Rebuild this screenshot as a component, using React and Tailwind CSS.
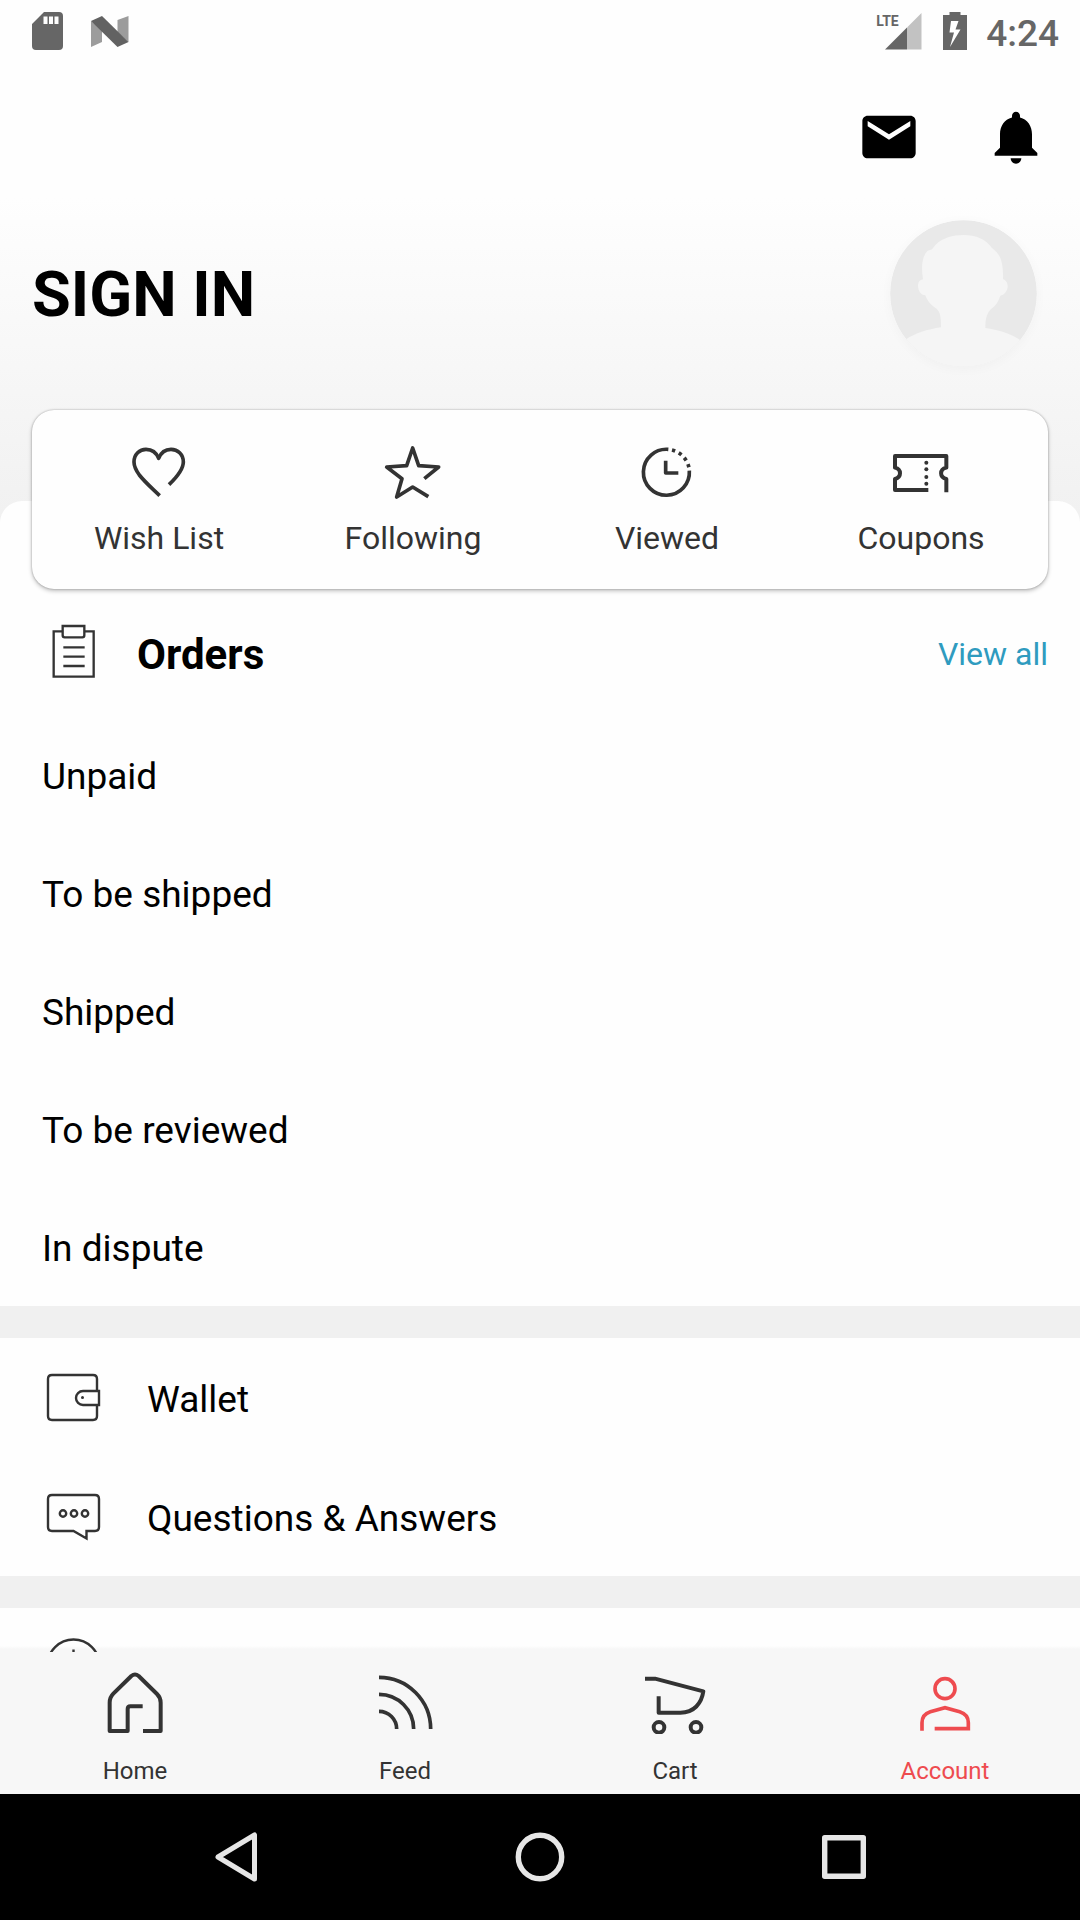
import React from "react";

function LineIcon({ viewBox, size = "size-[60px]", width = 11, children }) {
  return (
    <svg
      viewBox={viewBox}
      className={`${size} shrink-0`}
      fill="none"
      stroke="currentColor"
      strokeWidth={width}
      strokeLinejoin="round"
      aria-hidden="true"
    >
      {children}
    </svg>
  );
}

const shortcuts = [
  {
    label: "Wish List",
    icon: (
      <LineIcon viewBox="117 120 180 180">
        <path d="M209 287 C190 268 166 248 148 225 C138 211 132 200 132 186 C132 163 149 148 168 148 C188 148 200 160 206 175 C212 160 224 148 243 148 C263 148 280 163 280 186 C280 208 262 230 237 254" />
      </LineIcon>
    ),
  },
  {
    label: "Following",
    icon: (
      <LineIcon viewBox="879 120 180 180">
        <path d="M1015 290 L968 261 L920 291 L936 236 L890 201 L950 197 L968 144 L986 197 L1046 201 L1003 236" />
      </LineIcon>
    ),
  },
  {
    label: "Viewed",
    icon: (
      <LineIcon viewBox="171 120 180 180">
        <path d="M265 148 A69 69 0 1 0 328 212" />
        <path d="M276 150 A69 69 0 0 1 327 203" strokeDasharray="10 12" />
        <path d="M257 182 V219 H295" />
      </LineIcon>
    ),
  },
  {
    label: "Coupons",
    icon: (
      <LineIcon viewBox="933 120 180 180" width={12}>
        <path d="M1045 270 H945 V237 C965 231 965 208 945 203 V168 H1099 V203 C1078 208 1078 232 1099 237 V277" />
        <g fill="currentColor" stroke="none">
          <circle cx="1039" cy="188" r="6" />
          <circle cx="1039" cy="208" r="6" />
          <circle cx="1039" cy="231" r="6" />
          <circle cx="1039" cy="251" r="6" />
        </g>
      </LineIcon>
    ),
  },
];

const orderStates = ["Unpaid", "To be shipped", "Shipped", "To be reviewed", "In dispute"];

const tools = [
  {
    label: "Wallet",
    icon: (
      <LineIcon viewBox="43 1368 60 60" width={2.4}>
        <path d="M97 1391 V1379 q0 -4 -4 -4 H52 q-4 0 -4 4 V1416 q0 4 4 4 H93 q4 0 4 -4 V1405" />
        <path d="M99 1391 H83 a7 7 0 0 0 0 14 H99 Z" strokeLinejoin="miter" />
        <circle cx="82.5" cy="1397.5" r="1.5" fill="currentColor" stroke="none" />
      </LineIcon>
    ),
  },
  {
    label: "Questions & Answers",
    icon: (
      <LineIcon viewBox="43 1487 60 60" width={2.4}>
        <path
          d="M52 1495 H95 q4 0 4 4 V1527 q0 4 -4 4 H86.5 V1538.5 L73.5 1531 H52 q-4 0 -4 -4 V1499 q0 -4 4 -4 Z"
          strokeLinejoin="miter"
        />
        <circle cx="63" cy="1513.5" r="3.2" />
        <circle cx="74" cy="1513.5" r="3.2" />
        <circle cx="85" cy="1513.5" r="3.2" />
      </LineIcon>
    ),
  },
];

const tabs = [
  {
    label: "Home",
    icon: (
      <LineIcon viewBox="126 84 198 198" size="size-[66px]" width={12}>
        <path d="M248 199 H211 Q203 199 203 207 V273 H149 V188 Q149 172 160 161 L214 108 Q225 99 236 108 L291 162 Q302 173 302 188 V273 H249" />
      </LineIcon>
    ),
  },
  {
    label: "Feed",
    icon: (
      <LineIcon viewBox="936 84 198 198" size="size-[66px]">
        <path d="M957 112 A155 155 0 0 1 1112 267" />
        <path d="M957 163 A104 104 0 0 1 1061 267" />
        <path d="M957 214 A53 53 0 0 1 1010 267" />
      </LineIcon>
    ),
  },
  {
    label: "Cart",
    icon: (
      <LineIcon viewBox="126 84 198 198" size="size-[66px]" width={12}>
        <path d="M135 116 H165 L310 154 C305 190 282 218 241 218 H176 V169" />
        <circle cx="177" cy="262" r="16" />
        <circle cx="288" cy="262" r="16" />
      </LineIcon>
    ),
  },
  {
    label: "Account",
    active: true,
    icon: (
      <LineIcon viewBox="936 84 198 198" size="size-[66px]">
        <circle cx="1035" cy="146" r="30" />
        <path
          d="M966 272 V248 Q966 223 991 215 L1035 203 L1079 215 Q1105 223 1105 248 V266 H1004"
          strokeLinejoin="miter"
        />
      </LineIcon>
    ),
  },
];

function StatusBar() {
  return (
    <div className="flex h-[72px] shrink-0 items-start justify-between pt-3 pr-[21px] pl-8 text-[#666]">
      <div className="flex gap-7">
        <svg viewBox="0 0 31 38" className="h-[38px] w-[31px]" aria-hidden="true">
          <path
            fill="currentColor"
            fillRule="evenodd"
            d="M12 0 H27 Q31 0 31 4 V34 Q31 38 27 38 H4 Q0 38 0 34 V12 Z M11.5 4.5 V12 H15.5 V4.5 Z M17 4.5 V12 H21 V4.5 Z M22.5 4.5 V12 H26.5 V4.5 Z"
          />
        </svg>
        <svg viewBox="0 0 38 38" className="size-[38px]" aria-hidden="true">
          <path fill="#9c9c9c" d="M0 9 L11 18 V30 L0 35 Z M26.5 8 L37.5 4 V30 L26.5 20 Z" />
          <path fill="#626262" d="M0 9 L11 4 L37.5 30 L26.5 35 Z" />
        </svg>
      </div>
      <div className="flex">
        <div className="relative w-[46px]">
          <svg viewBox="0 0 46 38" className="h-[38px] w-[46px]" aria-hidden="true">
            <path fill="#c2c2c2" d="M45.5 1 V37.5 H31 V15.5 Z" />
            <path fill="currentColor" d="M31 15.5 V37.5 H9 Z" />
          </svg>
          <span className="absolute top-0 left-0 text-[14px] leading-[18px] font-bold">LTE</span>
        </div>
        <svg viewBox="0 0 24 38" className="ml-[21px] h-[38px] w-6" aria-label="Battery charging" role="img">
          <path
            fill="currentColor"
            fillRule="evenodd"
            d="M6.5 0 H17.5 V3 H24 V38 H0 V3 H6.5 Z M8 9 L6.5 20.5 H11 L7 35 L17.5 17.5 H12.5 L15.5 9 Z"
          />
        </svg>
        <time className="ml-[19px] text-[37px] leading-[43px] font-medium">4:24</time>
      </div>
    </div>
  );
}

function Avatar() {
  return (
    <svg
      viewBox="150 60 441 441"
      className="size-[147px] rounded-full shadow-[0_2px_12px_rgba(0,0,0,0.03)]"
      aria-hidden="true"
    >
      <clipPath id="avatar-clip">
        <circle cx="370.5" cy="280.5" r="220" />
      </clipPath>
      <g clipPath="url(#avatar-clip)">
        <rect x="150" y="60" width="441" height="441" fill="#e9e9e9" />
        <path
          fill="#f5f5f5"
          d="M370 105 C408 105 438 118 456 144 C468 154 476 162 480 172 C488 190 490 214 489 238 C497 240 504 248 503 262 C500 276 492 285 481 287 C476 304 466 318 454 326 C442 338 436 350 436 384 C480 390 520 404 545 424 L560 520 H180 L198 418 C225 400 262 388 303 382 C303 350 301 338 290 326 C272 316 262 302 256 286 C242 286 235 272 234 258 C234 246 240 240 249 238 C243 200 246 170 262 153 L276 148 L287 134 C308 114 338 105 370 105 Z"
        />
      </g>
    </svg>
  );
}

export default function App() {
  return (
    <div className="flex h-screen flex-col bg-[#fefefe] font-[Roboto,sans-serif] text-black">
      <StatusBar />

      <main className="min-h-0 flex-1 overflow-y-auto [scrollbar-width:none]">
        <header className="bg-[linear-gradient(to_bottom,#fefefe_24%,#f0f0f0_90%)] px-8 pt-[33px]">
          <div className="flex justify-end gap-[63px]">
            <button aria-label="Messages">
              <svg viewBox="0 0 24 24" className="size-16" fill="currentColor">
                <path d="M20 4H4c-1.1 0-1.99.9-1.99 2L2 18c0 1.1.9 2 2 2h16c1.1 0 2-.9 2-2V6c0-1.1-.9-2-2-2zm0 4l-8 5-8-5V6l8 5 8-5v2z" />
              </svg>
            </button>
            <button aria-label="Notifications">
              <svg viewBox="0 0 24 24" className="size-16" fill="currentColor">
                <path d="M12 22c1.1 0 2-.9 2-2h-4c0 1.1.89 2 2 2zm6-6v-5c0-3.07-1.64-5.64-4.5-6.32V4c0-.83-.67-1.5-1.5-1.5s-1.5.67-1.5 1.5v.68C7.63 5.36 6 7.92 6 11v5l-2 2v1h16v-1l-2-2z" />
              </svg>
            </button>
          </div>

          <div className="mt-[51px] flex items-center justify-between pr-[11px]">
            <a href="#sign-in" className="pt-0.5 text-[63px] leading-[76px] font-bold">
              SIGN IN
            </a>
            <Avatar />
          </div>

          <nav
            aria-label="Shortcuts"
            className="relative z-10 mt-[43px] grid grid-cols-4 rounded-[22px] bg-[#fefefe] pt-[30px] pb-[31px] text-[#333] shadow-[0_2px_4px_rgba(0,0,0,0.25),0_0_2px_rgba(0,0,0,0.3)]"
          >
            {shortcuts.map((s) => (
              <a key={s.label} href="#shortcut" className="flex flex-col items-center gap-[18px]">
                {s.icon}
                <span className="text-[32px] leading-10">{s.label}</span>
              </a>
            ))}
          </nav>
        </header>

        <section className="-mt-[88px] rounded-t-[22px] bg-[#fefefe] pt-[120px] pb-[30px]">
          <div className="flex h-[68px] items-center pr-8 pl-[43px]">
            <div className="self-start text-[#333]">
              <LineIcon viewBox="129 62 180 180" width={7}>
                <g strokeLinejoin="miter">
                  <path d="M186 93 H161 V229 H281 V93 H255" />
                  <path d="M188 77 H253 V105 Q253 111 247 111 H194 Q188 111 188 105 Z" />
                  <path d="M190 141 H254 M190 169 H254 M190 197 H254" />
                </g>
              </LineIcon>
            </div>
            <h2 className="ml-[34px] flex-1 text-[42px] leading-[50px] font-bold">Orders</h2>
            <a href="#orders" className="pb-0.5 text-[32px] leading-10 text-[#2f9bbf]">
              View all
            </a>
          </div>
          <ul className="mt-[61px] flex flex-col gap-16 px-[42px]">
            {orderStates.map((label) => (
              <li key={label} className="text-[37px] leading-[54px]">
                <a href="#orders">{label}</a>
              </li>
            ))}
          </ul>
        </section>

        <div className="h-8 bg-[#f0f0f0]" />

        <ul>
          {tools.map((t) => (
            <li key={t.label}>
              <a href="#tool" className="flex h-[119px] items-center gap-11 px-[43px]">
                <span className="text-[#333]">{t.icon}</span>
                <span className="pt-1 text-[37px] leading-[54px]">{t.label}</span>
              </a>
            </li>
          ))}
        </ul>

        <div className="h-8 bg-[#f0f0f0]" />

        <div className="bg-[linear-gradient(to_bottom,#fefefe_38px,#f7f7f7_41px)] px-[43px] pt-6 text-[#333]">
          <LineIcon viewBox="43 1632 60 60" width={2.4}>
            <circle cx="73.5" cy="1665.5" r="26" />
            <path d="M73.5 1649.5 V1666 H84" />
          </LineIcon>
        </div>
      </main>

      <nav aria-label="Main" className="grid shrink-0 grid-cols-4 bg-[#f7f7f7] pt-4 pb-[7px] text-[#333]">
        {tabs.map((t) => (
          <a
            key={t.label}
            href="#tab"
            aria-current={t.active ? "page" : undefined}
            className={`flex flex-col items-center gap-[21px] ${t.active ? "text-[#ee4b4f]" : ""}`}
          >
            {t.icon}
            <span className="text-[24px] leading-8">{t.label}</span>
          </a>
        ))}
      </nav>

      <div className="flex h-[126px] shrink-0 items-center justify-center gap-[244px] bg-black text-[#e6e6e6]">
        <button aria-label="Back">
          <svg viewBox="0 0 60 60" className="size-[60px]" fill="none" stroke="currentColor" strokeWidth="5" strokeLinejoin="round">
            <path d="M48.500 8 V52 L12 30 Z" />
          </svg>
        </button>
        <button aria-label="Home screen">
          <svg viewBox="0 0 60 60" className="size-[60px]" fill="none" stroke="currentColor" strokeWidth="5.4">
            <circle cx="30" cy="30" r="21.7" />
          </svg>
        </button>
        <button aria-label="Recent apps">
          <svg viewBox="0 0 60 60" className="size-[60px]" fill="none" stroke="currentColor" strokeWidth="5.4" strokeLinejoin="round">
            <rect x="10.7" y="10.7" width="38.6" height="38.6" />
          </svg>
        </button>
      </div>
    </div>
  );
}
